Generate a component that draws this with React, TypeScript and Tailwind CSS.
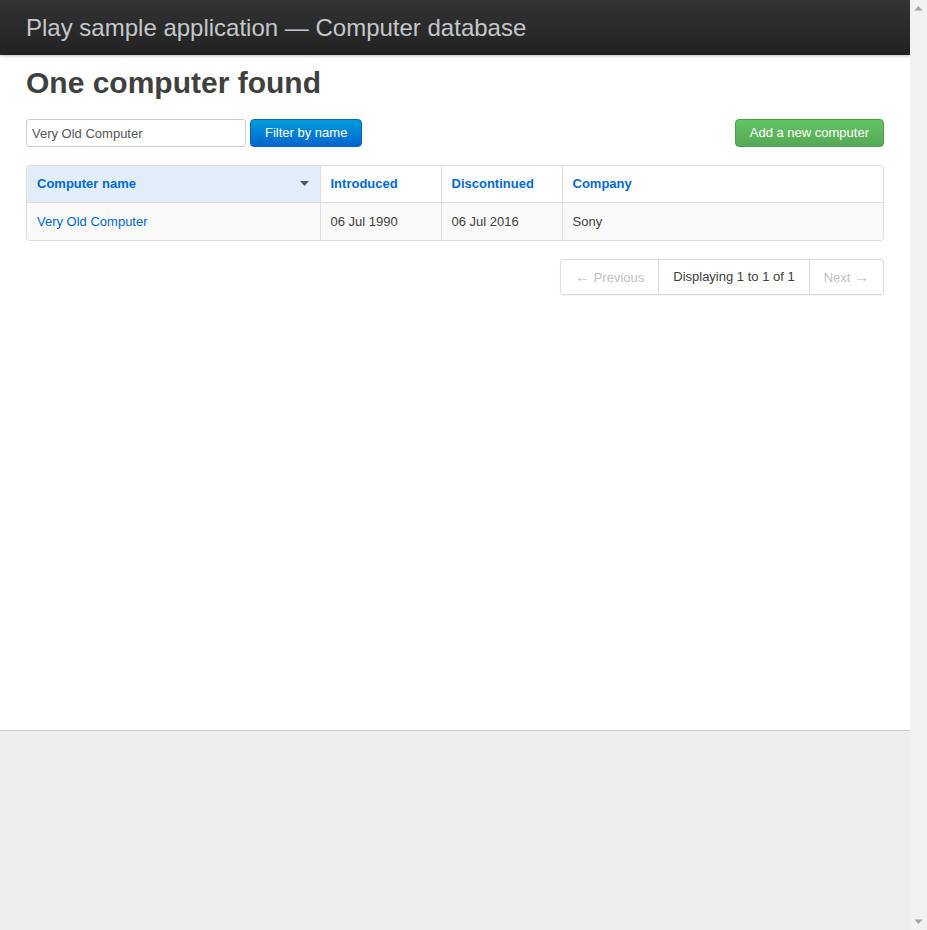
const font = { fontFamily: '"Liberation Sans", Arial, sans-serif' };

function Caret() {
  return (
    <svg width="9" height="5" viewBox="0 0 9 5" className="shrink-0">
      <path d="M0 0 L9 0 L4.5 5 Z" fill="#555" />
    </svg>
  );
}

// browser scrollbar strip seen at the right edge of the screenshot
function ScrollStrip() {
  return (
    <div className="flex h-[930px] w-[17px] shrink-0 flex-col justify-between bg-[#f1f1f1] py-[5px]">
      <svg width="17" height="6" viewBox="0 0 17 6">
        <path d="M4.5 5.5 L12.5 5.5 L8.5 1 Z" fill="#a3a3a3" />
      </svg>
      <svg width="17" height="6" viewBox="0 0 17 6">
        <path d="M4.5 0.5 L12.5 0.5 L8.5 5 Z" fill="#a3a3a3" />
      </svg>
    </div>
  );
}

export default function App() {
  return (
    <div style={font} className="flex h-[930px] overflow-hidden text-[13px] leading-[18px] text-[#404040]">
      <div className="min-w-0 flex-1 bg-[#eeeeee]">
        <div className="h-[731px] border-b border-[#cccccc] bg-white">
          <header className="h-[55px] bg-gradient-to-b from-[#333333] to-[#222222] px-[26px] shadow-[0_1px_3px_rgba(0,0,0,0.25)]">
            <h1 className="text-[24px] font-normal leading-[55px] text-[#c4c8cc]">
              Play sample application — Computer database
            </h1>
          </header>

          <section className="px-[26px]">
            <h1 className="mt-[10px] text-[30px] font-bold leading-[36px] text-[#404040]">One computer found</h1>

            <div className="mt-[18px] flex items-center justify-between">
              <div className="flex items-center gap-[4px]">
                <input
                  defaultValue="Very Old Computer"
                  className="h-[28px] w-[220px] rounded-[3px] border border-[#cccccc] px-[5px] text-[13px] text-[#555] outline-none"
                />
                <button className="h-[28px] rounded-[4px] border border-[#0064cd] bg-gradient-to-b from-[#049cdb] to-[#0064cd] px-[14px] text-[13px] text-white">
                  Filter by name
                </button>
              </div>
              <button className="h-[28px] rounded-[4px] border border-[#4d9b4d] bg-gradient-to-b from-[#62c462] to-[#57a957] px-[14px] text-[13px] text-white">
                Add a new computer
              </button>
            </div>

            <div className="mt-[18px] overflow-hidden rounded-[4px] border border-[#dddddd]">
              <table className="w-full border-collapse">
                <thead>
                  <tr className="h-[36px]">
                    <th className="w-[293px] bg-[#e1eef7] px-[10px] text-left font-bold text-[#0069d6]">
                      <div className="flex items-center justify-between pr-[1px]">
                        <span>Computer name</span>
                        <Caret />
                      </div>
                    </th>
                    <th className="w-[121px] border-l border-[#dddddd] px-[10px] text-left font-bold text-[#0069d6]">Introduced</th>
                    <th className="w-[121px] border-l border-[#dddddd] px-[10px] text-left font-bold text-[#0069d6]">Discontinued</th>
                    <th className="border-l border-[#dddddd] px-[10px] text-left font-bold text-[#0069d6]">Company</th>
                  </tr>
                </thead>
                <tbody>
                  <tr className="h-[38px] border-t border-[#dddddd] bg-[#f9f9f9]">
                    <td className="px-[10px] pt-[1px] text-[#0069d6]">Very Old Computer</td>
                    <td className="border-l border-[#dddddd] px-[10px] pt-[1px]">06 Jul 1990</td>
                    <td className="border-l border-[#dddddd] px-[10px] pt-[1px]">06 Jul 2016</td>
                    <td className="border-l border-[#dddddd] px-[10px] pt-[1px]">Sony</td>
                  </tr>
                </tbody>
              </table>
            </div>

            <div className="mt-[18px] flex justify-end">
              <ul className="flex h-[36px] rounded-[3px] border border-[#dddddd] shadow-[0_1px_2px_rgba(0,0,0,0.05)]">
                <li className="px-[14px] leading-[34px] text-[#bfbfbf]">
                  <span className="text-[15px]">←</span> Previous
                </li>
                <li className="border-l border-[#dddddd] px-[14px] leading-[34px] text-[#404040]">Displaying 1 to 1 of 1</li>
                <li className="border-l border-[#dddddd] px-[14px] leading-[34px] text-[#bfbfbf]">
                  Next <span className="text-[15px]">→</span>
                </li>
              </ul>
            </div>
          </section>
        </div>
      </div>
      <ScrollStrip />
    </div>
  );
}
